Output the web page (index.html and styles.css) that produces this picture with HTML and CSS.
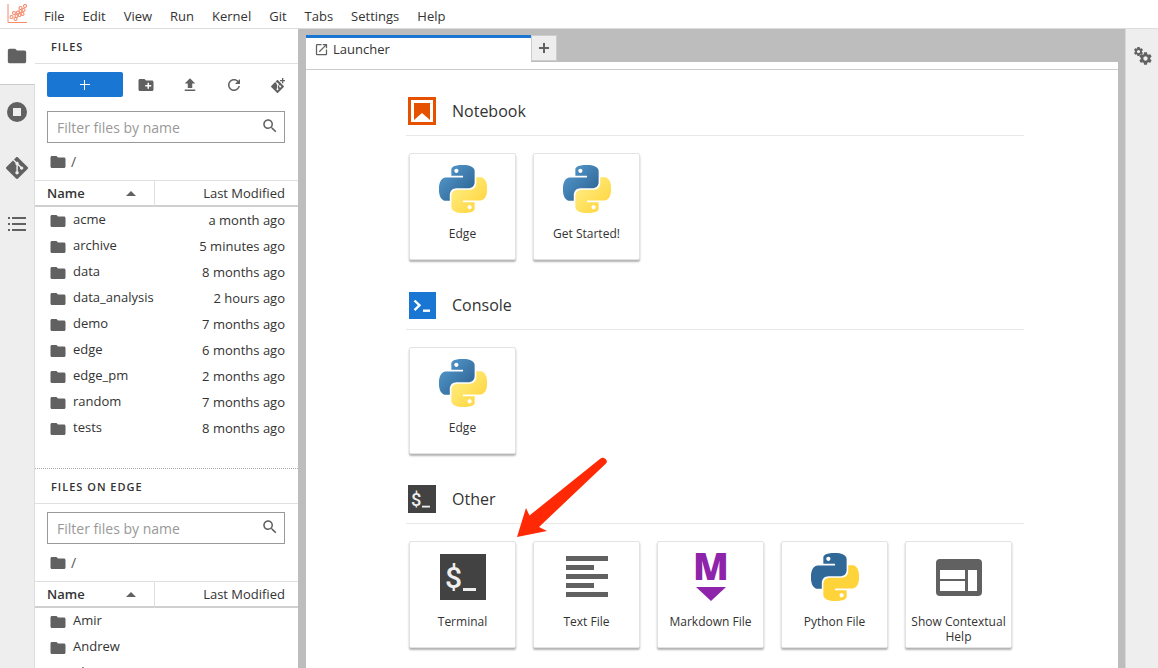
FILE: index.html
```html
<!DOCTYPE html>
<html lang="en">
<head>
<meta charset="utf-8">
<title>Launcher</title>
<link rel="stylesheet" href="styles.css">
</head>
<body>

<svg class="sprite" aria-hidden="true">
	<defs>
		<linearGradient id="pyblue" x1="0" y1="0" x2="0.8" y2="0.8"><stop offset="0" stop-color="#5a9fd4"/><stop offset="1" stop-color="#306998"/></linearGradient>
		<linearGradient id="pyyellow" x1="0.9" y1="0.9" x2="0.3" y2="0.3"><stop offset="0" stop-color="#ffd43b"/><stop offset="1" stop-color="#ffe873"/></linearGradient>
	</defs>
	<symbol id="i-folder" viewBox="0 0 24 24"><path d="M10 4H4c-1.1 0-1.99.9-1.99 2L2 18c0 1.1.9 2 2 2h16c1.1 0 2-.9 2-2V8c0-1.1-.9-2-2-2h-8l-2-2z"/></symbol>
	<symbol id="i-search" viewBox="0 0 24 24"><path d="M15.5 14h-.79l-.28-.27C15.41 12.59 16 11.11 16 9.5 16 5.91 13.09 3 9.5 3S3 5.91 3 9.5 5.91 16 9.5 16c1.61 0 3.09-.59 4.23-1.57l.27.28v.79l5 4.99L20.49 19l-4.99-5zm-6 0C7.01 14 5 11.99 5 9.5S7.01 5 9.5 5 14 7.01 14 9.5 11.99 14 9.5 14z"/></symbol>
	<symbol id="i-git" viewBox="0 0 24 24"><path d="M23.546 10.93L13.067.452c-.604-.603-1.582-.603-2.188 0L8.708 2.627l2.76 2.76c.645-.215 1.379-.07 1.889.441.516.515.658 1.258.438 1.9l2.658 2.66c.645-.223 1.387-.078 1.9.435.721.72.721 1.884 0 2.604-.719.719-1.881.719-2.6 0-.539-.541-.674-1.337-.404-1.996L12.86 8.955v6.525c.176.086.342.203.488.348.713.721.713 1.883 0 2.6-.719.721-1.889.721-2.609 0-.719-.719-.719-1.879 0-2.598.182-.18.387-.316.605-.406V8.835c-.217-.091-.424-.222-.6-.401-.545-.545-.676-1.342-.396-2.009L7.636 3.7.45 10.881c-.6.605-.6 1.584 0 2.189l10.48 10.477c.604.604 1.582.604 2.186 0l10.43-10.43c.605-.603.605-1.582 0-2.187"/></symbol>
	<symbol id="i-gear" viewBox="0 0 24 24"><path d="M19.43 12.98c.04-.32.07-.64.07-.98s-.03-.66-.07-.98l2.11-1.65c.19-.15.24-.42.12-.64l-2-3.46c-.12-.22-.39-.3-.61-.22l-2.49 1c-.52-.4-1.08-.73-1.69-.98l-.38-2.65C14.46 2.18 14.25 2 14 2h-4c-.25 0-.46.18-.49.42l-.38 2.65c-.61.25-1.17.59-1.69.98l-2.49-1c-.23-.09-.49 0-.61.22l-2 3.46c-.13.22-.07.49.12.64l2.11 1.65c-.04.32-.07.65-.07.98s.03.66.07.98l-2.11 1.65c-.19.15-.24.42-.12.64l2 3.46c.12.22.39.3.61.22l2.49-1c.52.4 1.08.73 1.69.98l.38 2.65c.03.24.24.42.49.42h4c.25 0 .46-.18.49-.42l.38-2.65c.61-.25 1.17-.59 1.69-.98l2.49 1c.23.09.49 0 .61-.22l2-3.46c.12-.22.07-.49-.12-.64l-2.11-1.65zM12 15.5c-1.93 0-3.5-1.57-3.5-3.5s1.57-3.5 3.5-3.5 3.5 1.57 3.5 3.5-1.57 3.5-3.5 3.5z"/></symbol>
	<symbol id="py-top" viewBox="0 0 24 24"><path d="M14.25.18l.9.2.73.26.59.3.45.32.34.34.25.34.16.33.1.3.04.26.02.2-.01.13V8.5l-.05.63-.13.55-.21.46-.26.38-.3.31-.33.25-.35.19-.35.14-.33.1-.3.07-.26.04-.21.02H8.77l-.69.05-.59.14-.5.22-.41.27-.33.32-.27.35-.2.36-.15.37-.1.35-.07.32-.04.27-.02.21v3.06H3.17l-.21-.03-.28-.07-.32-.12-.35-.18-.36-.26-.36-.36-.35-.46-.32-.59-.28-.73-.21-.88-.14-1.05-.05-1.23.06-1.22.16-1.04.24-.87.32-.71.36-.57.4-.44.42-.33.42-.24.4-.16.36-.1.32-.05.24-.01h.16l.06.01h8.16v-.83H6.18l-.01-2.75-.02-.37.05-.34.11-.31.17-.28.25-.26.31-.23.38-.2.44-.18.51-.15.58-.12.64-.1.71-.06.77-.04.84-.02 1.27.05zm-6.3 1.98l-.23.33-.08.41.08.41.23.34.33.22.41.09.41-.09.33-.22.23-.34.08-.41-.08-.41-.23-.33-.33-.22-.41-.09-.41.09z"/></symbol>
	<symbol id="py-bottom" viewBox="0 0 24 24"><path d="M21.04 6.11l.28.06.32.12.35.18.36.27.36.35.35.47.32.59.28.73.21.88.14 1.04.05 1.23-.06 1.23-.16 1.04-.24.86-.32.71-.36.57-.4.45-.42.33-.42.24-.4.16-.36.09-.32.05-.24.02-.16-.01h-8.22v.82h5.84l.01 2.76.02.36-.05.34-.11.31-.17.29-.25.25-.31.24-.38.2-.44.17-.51.15-.58.13-.64.09-.71.07-.77.04-.84.01-1.27-.04-1.07-.14-.9-.2-.73-.25-.59-.3-.45-.33-.34-.34-.25-.34-.16-.33-.1-.3-.04-.25-.02-.2.01-.13v-5.34l.05-.64.13-.54.21-.46.26-.38.3-.32.33-.24.35-.2.35-.14.33-.1.3-.06.26-.04.21-.02.13-.01h5.84l.69-.05.59-.14.5-.21.41-.28.33-.32.27-.35.2-.36.15-.36.1-.35.07-.32.04-.28.02-.21V6.07h2.09l.14.01zm-6.47 14.25l-.23.33-.08.41.08.41.23.33.33.23.41.08.41-.08.33-.23.23-.33.08-.41-.08-.41-.23-.33-.33-.23-.41-.08-.41.08z"/></symbol>
	<symbol id="i-kernel" viewBox="0 0 24 24"><use href="#py-top" fill="url(#pyblue)"/><use href="#py-bottom" fill="url(#pyyellow)"/></symbol>
	<symbol id="i-python" viewBox="0 0 24 24"><use href="#py-top" fill="#306998"/><use href="#py-bottom" fill="#ffd43b"/></symbol>
	<symbol id="i-terminal" viewBox="0 0 46 46"><rect width="46" height="46" fill="#424242"/><text class="dollar" x="5" y="34">$</text><rect x="23" y="34" width="13" height="3" fill="#eee"/></symbol>
</svg>

<header class="topbar">
	<svg class="logo" viewBox="0 0 20 20" stroke="#f58a6c"><path d="M1 0v18.500h19"/><g stroke-width="1.100"><circle cx="4.500" cy="13" r="1.500"/><circle cx="7" cy="9" r="1.500"/><circle cx="8.500" cy="15" r="1.500"/><circle cx="9.500" cy="12" r="1.500"/><circle cx="11" cy="8.500" r="1.500"/><circle cx="12.500" cy="11" r="1.500"/><circle cx="13.500" cy="7" r="1.500"/><circle cx="13.500" cy="4" r="1.500"/><circle cx="15.500" cy="10" r="1.500"/><circle cx="16.500" cy="6" r="1.500"/><circle cx="18" cy="2" r="1.500"/></g></svg>
	<nav class="menu">
		<button type="button">File</button>
		<button type="button">Edit</button>
		<button type="button">View</button>
		<button type="button">Run</button>
		<button type="button">Kernel</button>
		<button type="button">Git</button>
		<button type="button">Tabs</button>
		<button type="button">Settings</button>
		<button type="button">Help</button>
	</nav>
</header>

<div class="shell">
	<nav class="sidebar">
		<button type="button" class="active" aria-label="Files"><svg width="22" height="22"><use href="#i-folder"/></svg></button>
		<button type="button" aria-label="Running"><svg width="22" height="22" viewBox="0 0 22 22"><path fill-rule="evenodd" d="M11 1a10 10 0 1 0 0 20a10 10 0 1 0 0-20zM7 7h8v8H7z"/></svg></button>
		<button type="button" aria-label="Git"><svg width="22" height="22"><use href="#i-git"/></svg></button>
		<button type="button" aria-label="Contents"><svg width="18" height="14" viewBox="0 0 18 14"><path d="M0 0h2v2H0zM4 0h14v2H4zM0 6h2v2H0zM4 6h14v2H4zM0 12h2v2H0zM4 12h14v2H4z"/></svg></button>
	</nav>

	<aside class="browser">
		<section class="pane first">
			<h2>FILES</h2>
			<div class="tools">
				<button type="button" class="new" aria-label="New Launcher"><svg width="10" height="10" viewBox="0 0 10 10"><path d="M4 0h1v4h5v1H5v5H4V5H0V4h4z"/></svg></button>
				<button type="button" aria-label="New Folder"><svg width="18" height="18" viewBox="0 0 24 24"><path d="M20 6h-8l-2-2H4c-1.110 0-1.990.890-1.990 2L2 18c0 1.110.890 2 2 2h16c1.110 0 2-.890 2-2V8c0-1.110-.890-2-2-2zm-1 8h-3v3h-2v-3h-3v-2h3V9h2v3h3v2z"/></svg></button>
				<button type="button" aria-label="Upload"><svg width="18" height="18" viewBox="0 0 24 24"><path d="M9 16h6v-6h4l-7-7-7 7h4zm-4 2h14v2H5z"/></svg></button>
				<button type="button" aria-label="Refresh"><svg width="18" height="18" viewBox="0 0 18 18"><path d="M9 13.500c-2.490 0-4.500-2.010-4.500-4.500S6.510 4.500 9 4.500c1.240 0 2.360.520 3.170 1.330L10 8h5V3l-1.760 1.760C12.150 3.680 10.660 3 9 3 5.690 3 3.010 5.690 3.010 9S5.690 15 9 15c2.970 0 5.430-2.160 5.900-5h-1.520c-.460 2-2.240 3.500-4.380 3.500z"/></svg></button>
				<button type="button" aria-label="Git Clone"><svg width="16" height="16" viewBox="0 0 16 16"><use href="#i-git" x="1" y="3" width="13" height="13"/><path d="M12 1h1.300v2H15v1.300h-1.700v2H12v-2h-2V3h2z"/></svg></button>
			</div>
			<label class="filter"><input type="text" placeholder="Filter files by name" aria-label="Filter files by name"><svg width="18" height="18"><use href="#i-search"/></svg></label>
			<div class="crumbs"><svg width="18" height="18"><use href="#i-folder"/></svg><a href="#">/</a></div>
			<table class="files">
				<thead><tr><th class="name"><span>Name<i></i></span></th><th>Last Modified</th></tr></thead>
				<tbody>
					<tr><td><svg><use href="#i-folder"/></svg>acme</td><td>a month ago</td></tr>
					<tr><td><svg><use href="#i-folder"/></svg>archive</td><td>5 minutes ago</td></tr>
					<tr><td><svg><use href="#i-folder"/></svg>data</td><td>8 months ago</td></tr>
					<tr><td><svg><use href="#i-folder"/></svg>data_analysis</td><td>2 hours ago</td></tr>
					<tr><td><svg><use href="#i-folder"/></svg>demo</td><td>7 months ago</td></tr>
					<tr><td><svg><use href="#i-folder"/></svg>edge</td><td>6 months ago</td></tr>
					<tr><td><svg><use href="#i-folder"/></svg>edge_pm</td><td>2 months ago</td></tr>
					<tr><td><svg><use href="#i-folder"/></svg>random</td><td>7 months ago</td></tr>
					<tr><td><svg><use href="#i-folder"/></svg>tests</td><td>8 months ago</td></tr>
				</tbody>
			</table>
		</section>
		<section class="pane second">
			<h2>FILES ON EDGE</h2>
			<label class="filter"><input type="text" placeholder="Filter files by name" aria-label="Filter files by name"><svg width="18" height="18"><use href="#i-search"/></svg></label>
			<div class="crumbs"><svg width="18" height="18"><use href="#i-folder"/></svg><a href="#">/</a></div>
			<table class="files">
				<thead><tr><th class="name"><span>Name<i></i></span></th><th>Last Modified</th></tr></thead>
				<tbody>
					<tr><td><svg><use href="#i-folder"/></svg>Amir</td><td></td></tr>
					<tr><td><svg><use href="#i-folder"/></svg>Andrew</td><td></td></tr>
					<tr><td><svg><use href="#i-folder"/></svg>Chris</td><td></td></tr>
				</tbody>
			</table>
		</section>
	</aside>

	<main class="dock">
		<div class="tabs">
			<button type="button" class="tab"><svg width="15" height="15" viewBox="0 0 24 24"><path d="M19 19H5V5h7V3H5a2 2 0 00-2 2v14a2 2 0 002 2h14c1.100 0 2-.900 2-2v-7h-2v7zM14 3v2h3.590l-9.830 9.830 1.410 1.410L19 6.410V10h2V3h-7z"/></svg>Launcher</button>
			<button type="button" class="add" aria-label="New tab"><svg width="10" height="10" viewBox="0 0 10 10"><path d="M4 0h2v4h4v2H6v4H4V6H0V4h4z"/></svg></button>
		</div>
		<div class="toolbar"></div>
		<div class="launcher">
			<section>
				<h3><svg class="notebook" viewBox="0 0 28 28"><path fill-rule="evenodd" d="M0 0h28v28H0zM3 3v22h22V3z"/><path d="M6 6h16v17l-8-7-8 7z"/></svg>Notebook</h3>
				<ul>
					<li><button type="button"><svg><use href="#i-kernel"/></svg><span>Edge</span></button></li>
					<li><button type="button"><svg><use href="#i-kernel"/></svg><span>Get Started!</span></button></li>
				</ul>
			</section>
			<section>
				<h3><svg viewBox="0 0 28 28"><rect x="1" y="1" width="27" height="27" fill="#1976d2"/><path d="M6.500 9.500l5 4.800-5 4.800" fill="none" stroke="#fff" stroke-width="2.400"/><path d="M15 18.500h7v2.400h-7z" fill="#fff"/></svg>Console</h3>
				<ul>
					<li><button type="button"><svg><use href="#i-kernel"/></svg><span>Edge</span></button></li>
				</ul>
			</section>
			<section>
				<h3><svg><use href="#i-terminal"/></svg>Other</h3>
				<ul>
					<li>
						<button type="button"><svg viewBox="0 0 48 48"><use href="#i-terminal" x="1" y="1" width="46" height="46"/></svg><span>Terminal</span></button>
						<svg class="arrow" viewBox="0 0 90 80"><path d="M0 80L9 51l3.500 7.500L83.500 1.500Q86 0 88.500 2T89 6.500L22 70l8 4z"/></svg>
					</li>
					<li><button type="button"><svg viewBox="0 0 48 48"><path d="M3 3h42v5H3zM3 12h28v5H3zM3 21h42v5H3zM3 30h28v5H3zM3 39h42v5H3z"/></svg><span>Text File</span></button></li>
					<li><button type="button"><svg class="markdown" viewBox="0 0 48 48"><text class="mark" x="24" y="27">M</text><path d="M9 34h30L24 48z"/></svg><span>Markdown File</span></button></li>
					<li><button type="button"><svg><use href="#i-python"/></svg><span>Python File</span></button></li>
					<li><button type="button"><svg viewBox="0 0 48 48"><path fill-rule="evenodd" d="M5 6h38a4 4 0 0 1 4 4v29a4 4 0 0 1-4 4H5a4 4 0 0 1-4-4V10a4 4 0 0 1 4-4zM5 17v9h25v-9zM5 28v10h25V28zM33 17v21h9V17z"/></svg><span>Show Contextual Help</span></button></li>
				</ul>
			</section>
		</div>
	</main>

	<nav class="rightbar">
		<button type="button" aria-label="Property Inspector"><svg width="20" height="20" viewBox="0 0 20 20"><use href="#i-gear" x="0" y="0" width="11" height="11"/><use href="#i-gear" x="5" y="5" width="15" height="15"/></svg></button>
	</nav>
</div>
</body>
</html>
```
FILE: styles.css
```css
*{box-sizing:border-box;}
html,body{height:100%;}
body{display:flex; flex-direction:column; margin:0; overflow:hidden; background:#fff; color:#333; font-family:"Open Sans","Noto Sans",sans-serif; font-size:13px;}
button{margin:0; padding:0; border:0; background:none; color:inherit; font:inherit; cursor:pointer;}
svg{flex:none; fill:#616161;}
ul{margin:0; padding:0; list-style:none;}
.sprite{position:absolute; width:0; height:0;}

.topbar{display:flex; flex:none; align-items:center; height:29px; padding-left:7px; border-bottom:1px solid #dcdcdc;}
.logo{width:20px; height:20px; fill:none;}
.menu{display:flex; padding:4px 0 0 8px;}
.menu button{padding:0 9px;}

.shell{display:flex; flex:1; min-height:0;}
.sidebar,.rightbar{flex:none; background:#eee;}
.sidebar{width:35px; border-right:1px solid #ddd;}
.sidebar button,.rightbar button{display:flex; align-items:center; justify-content:center; width:34px; height:56px; padding-bottom:2px;}
.sidebar .active{width:35px; padding-right:1px; border-bottom:1px solid #ccc; background:#fff;}
.rightbar{width:33px; border-left:1px solid #d8d8d8;}

.browser{display:flex; flex-direction:column; flex:none; width:263px;}
.pane.first{flex:none; height:440px; border-bottom:1px dotted #aaa;}
.pane.second{flex:1; min-height:0; overflow:hidden;}
.pane h2{height:35px; margin:0 0 8px; padding-left:16px; border-bottom:1px solid #e0e0e0; font-size:11px; font-weight:600; line-height:36px; letter-spacing:1px;}
.tools{display:flex; align-items:center; justify-content:space-between; height:25px; margin:0 8px 14px 12px;}
.tools button{display:flex; align-items:center; justify-content:center; width:24px; height:24px;}
.tools .new{width:76px; height:25px; margin-right:-9px; border-radius:2px; background:#1976d2;}
.tools .new svg{fill:#fff;}
.filter{display:flex; align-items:center; height:32px; margin:0 13px 0 12px; padding:0 5px 0 9px; border:1px solid #999;}
.filter svg{margin-bottom:2px;}
.filter input{flex:1; min-width:0; padding:0; border:0; outline:0; background:none; font:inherit; font-size:14px;}
.filter input::placeholder{color:#999; opacity:1;}
.crumbs{display:flex; align-items:center; height:37px; padding-left:14px;}
.crumbs a{margin-left:4px; color:#555; font-size:14px; text-decoration:none;}
.files{width:100%; border-collapse:separate; border-spacing:0; table-layout:fixed;}
.files th{height:27px; padding:0 13px 0 12px; border-top:1px solid #e0e0e0; border-bottom:2px solid #d0d0d0; font-weight:400; text-align:right;}
.files th.name{width:120px; border-right:1px solid #e0e0e0; font-weight:600; text-align:left;}
.files .name span{display:flex; align-items:center; justify-content:space-between; padding-right:5px;}
.files i{border:5px solid transparent; border-top:0; border-bottom-color:#616161;}
.files td{height:26px; padding:0; white-space:nowrap;}
.files td:first-child{padding-left:14px;}
.files td:last-child{padding-right:13px; text-align:right;}
.files td svg{width:18px; height:18px; margin-right:6px; vertical-align:middle;}

.dock{display:flex; flex-direction:column; flex:1; min-width:0; padding:6px 7px 0 8px; background:#bdbdbd;}
.tabs{display:flex; flex:none; height:27px;}
.tab{display:flex; align-items:center; gap:4px; width:225px; padding:0 0 2px 8px; border-top:3px solid #1976d2; background:#fff;}
.add{display:flex; align-items:center; justify-content:center; width:26px; height:26px; border:1px solid #ccc; background:#eee;}
.toolbar{flex:none; height:8px; border-bottom:1px solid #ccc; background:#fff;}
.launcher{flex:1; min-height:0; padding:26px 94px 0 100px; overflow:hidden; background:#fff;}
.launcher section{height:194px;}
.launcher h3{display:flex; align-items:center; gap:16px; height:40px; margin:0; padding:0 0 10px 2px; border-bottom:1px solid #e8e8e8; font-size:16px; font-weight:400;}
.launcher h3 svg{width:28px; height:28px;}
.launcher ul{display:flex; gap:17px; padding:17px 0 0 3px;}
.launcher li{position:relative;}
.launcher li button{display:flex; flex-direction:column; align-items:center; width:107px; height:107px; padding:11px 4px 0; border:1px solid #e3e3e3; border-radius:2px; background:#fff; box-shadow:0 2px 2px rgba(0,0,0,.3);}
.launcher li button svg{width:48px; height:48px;}
.launcher li span{margin:13px -4px 0; font-size:12px; line-height:15px;}
.notebook{fill:#e65100;}
.markdown{fill:#8e24aa;}
.dollar{fill:#eee; font-family:Roboto,sans-serif; font-size:30px; font-weight:500;}
.mark{font-size:37px; font-weight:800; text-anchor:middle;}
.launcher .arrow{position:absolute; top:-84px; left:108px; z-index:1; width:90px; height:80px; fill:#ff2a05;}
```
